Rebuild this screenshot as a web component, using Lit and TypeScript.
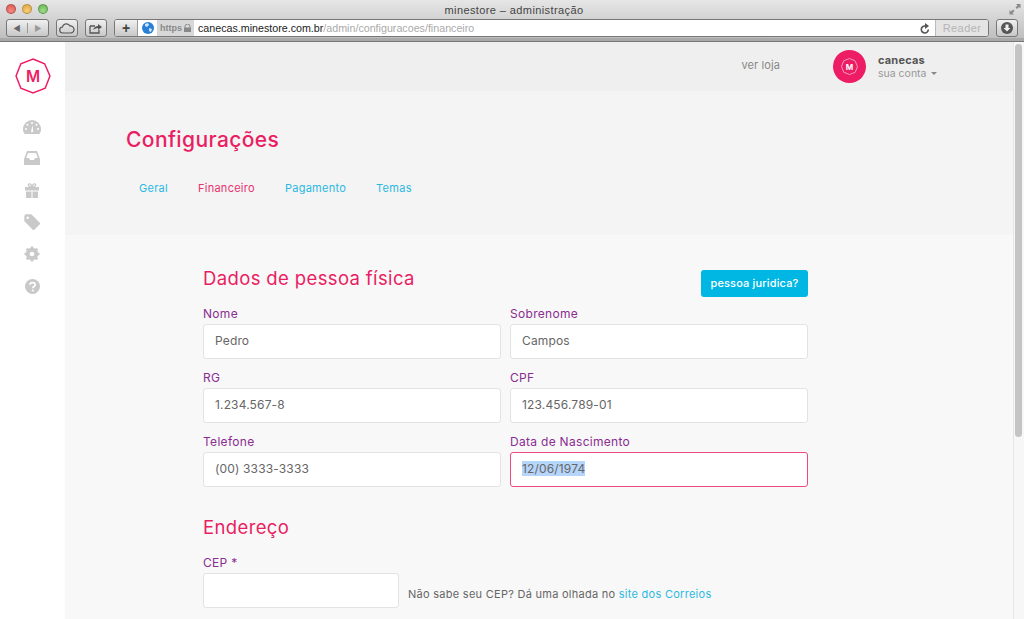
import { LitElement, html, css, svg } from "lit";
import { customElement } from "lit/decorators.js";

const field = (label: string, value: string, focus = false) => html`
  <div class="field">
    <label>${label}</label>
    <div class="input ${focus ? "focus" : ""}">${focus ? html`<span class="sel">${value}</span>` : value}</div>
  </div>`;

const octagon = svg`<polygon points="17,1 28,5.500 33,17 28.500,28.500 17,33 5.500,28.500 1,17 5.500,5.500" fill="none" stroke="#ee1c64" stroke-width="1.4"/>`;

@customElement("app-root")
export class AppRoot extends LitElement {
  static styles = css`
    :host { display: block; width: 1024px; height: 619px; overflow: hidden; position: relative; font-family: "Inter", "Liberation Sans", sans-serif; background: #f8f8f8; }
    * { box-sizing: border-box; }
    .chrome { height: 42px; background: linear-gradient(#e6e6e6, #bcbcbc); border-bottom: 1px solid #777; box-shadow: inset 0 -3px 0 #a9a9a9; position: relative; display: flex; flex-direction: column; }
    .titlebar { height: 19px; display: flex; align-items: center; justify-content: center; padding-left: 4px; font: 11px "Liberation Sans", sans-serif; letter-spacing: .4px; color: #444; position: relative; }
    .lights { position: absolute; left: 6px; top: 4px; display: flex; gap: 6px; }
    .light { width: 10px; height: 10px; border-radius: 50%; border: 1px solid #0003; }
    .red { background: radial-gradient(circle at 50% 70%, #f28b82, #d9534a); }
    .amber { background: radial-gradient(circle at 50% 70%, #f6cf7a, #e0a23c); }
    .green { background: radial-gradient(circle at 50% 70%, #a2dc8c, #5fb14d); }
    .expand { position: absolute; right: 3px; top: 3px; }
    .toolbar { height: 19px; display: flex; align-items: stretch; padding: 0 6px; gap: 7px; }
    .tbtn { height: 18px; border: 1px solid #777; border-radius: 3px; background: linear-gradient(#f0f0f0, #c8c8c8); display: flex; align-items: center; justify-content: center; flex: none; }
    .nav { width: 43px; }
    .nav span { flex: 1; text-align: center; font-size: 8px; color: #666; }
    .nav span + span { border-left: 1px solid #999; color: #999; }
    .cloud, .share { width: 22px; }
    .urlbar { flex: 1; height: 18px; border: 1px solid #777; border-radius: 3px; background: #fff; display: flex; align-items: center; overflow: hidden; }
    .plus { width: 23px; height: 100%; background: linear-gradient(#f0f0f0, #c8c8c8); border-right: 1px solid #999; display: flex; align-items: center; justify-content: center; font: bold 14px "Liberation Sans", sans-serif; color: #444; }
    .globe { margin: 0 3px 0 4px; display: block; flex: none; }
    .https { font: bold 9px "Liberation Sans", sans-serif; color: #888; background: #d8d8d8; height: 100%; width: 37px; padding-left: 3px; display: flex; align-items: center; gap: 2px; flex: none; }
    .url { flex: 1; font: 10.7px "Liberation Sans", sans-serif; color: #222; padding-left: 4px; }
    .url i { font-style: normal; color: #aaa; }
    .reload { margin-right: 5px; display: block; }
    .reader { width: 53px; height: 100%; background: #e4e4e4; border-left: 1px solid #bbb; color: #b5b5b5; font: 11px "Liberation Sans", sans-serif; letter-spacing: .4px; display: flex; align-items: center; justify-content: center; }
    .dl { width: 22px; }
    .body { display: flex; height: 577px; }
    .side { width: 65px; flex: none; background: #fff; display: flex; flex-direction: column; align-items: center; padding-top: 16px; }
    .logo { display: block; margin-bottom: 17px; }
    .sideicon { height: 32px; width: 65px; display: flex; align-items: center; justify-content: center; padding-right: 1px; }
    .sideicon.dash { height: 31px; }
    .main { flex: 1; min-width: 0; }
    .top { height: 49px; background: #efefef; display: flex; align-items: center; padding-right: 85px; justify-content: flex-end; }
    .verloja { font-size: 11px; letter-spacing: .1px; color: #888; margin-right: 53px; margin-bottom: 3px; }
    .avatar { width: 33px; height: 33px; border-radius: 50%; background: #ee1c64; display: flex; align-items: center; justify-content: center; margin-right: 12px; }
    .who { width: 61px; }
    .who b { display: block; font-size: 11px; font-weight: 700; color: #555; line-height: 14px; letter-spacing: .2px; }
    .who span { font-size: 10.5px; color: #999; line-height: 13px; display: flex; align-items: center; gap: 5px; white-space: nowrap; }
    .caret { width: 0; height: 0; border: 3px solid transparent; border-top: 3px solid #888; margin-top: 3px; }
    .head { height: 144px; background: #f4f4f4; padding: 35px 0 0 61px; }
    h1 { margin: 0; font-size: 21px; line-height: 28px; font-weight: 500; color: #e91e63; letter-spacing: .4px; }
    .tabs { display: flex; margin: 26px 0 0 13px; gap: 30px; font-size: 11px; letter-spacing: .27px; line-height: 16px; color: #2bb8e3; }
    .tabs .on { color: #e8326f; }
    .content { padding: 30px 0 0 138px; width: 743px; }
    .sect { display: flex; justify-content: space-between; align-items: flex-start; height: 41px; }
    h2 { margin: 0; font-size: 18.5px; line-height: 26px; font-weight: 400; color: #e91e63; letter-spacing: .37px; }
    .btn { width: 107px; height: 27px; margin-top: 5px; padding-bottom: 1px; background: #00b7e4; color: #fff; border-radius: 3px; font-size: 11px; letter-spacing: .15px; font-weight: 500; display: flex; align-items: center; justify-content: center; }
    .grid { display: grid; grid-template-columns: 298px 298px; column-gap: 9px; row-gap: 11px; }
    .field label { display: block; font-size: 12px; letter-spacing: .3px; line-height: 15px; color: #8a2c92; height: 18px; }
    .input { height: 35px; background: #fff; border: 1px solid #e3e3e3; border-radius: 3px; padding: 0 0 2px 11px; font-size: 12px; letter-spacing: .15px; color: #666; display: flex; align-items: center; }
    .input.focus { border-color: #ec4a80; }
    .sel { background: #b5d5fb; line-height: 15px; }
    .addr { margin-top: 27px; height: 41px; }
    .cep { display: flex; align-items: flex-end; gap: 9px; }
    .cep .field { width: 196px; }
    .hint { font-size: 11px; letter-spacing: .27px; line-height: 14px; color: #666; padding-bottom: 7px; white-space: nowrap; }
    .hint a { color: #2bb8e3; }
    .scroll { position: absolute; right: 2px; top: 44px; width: 7px; height: 393px; background: #c4c4c4; border-radius: 4px; }
    .gutter { position: absolute; right: 0; top: 42px; bottom: 0; width: 11px; background: #f7f7f7; border-left: 1px solid #e6e6e6; }
  `;

  render() {
    const g = "#c9c9c9";
    return html`
      <div class="chrome">
        <div class="titlebar">
          <div class="lights">
            <div class="light red"></div>
            <div class="light amber"></div>
            <div class="light green"></div>
          </div>
          minestore – administração
          <svg class="expand" width="12" height="12" viewBox="0 0 12 12"><path d="M7 1h4.500v4.500L10 4 8 6 6.500 4.500l2-2zM.5 11.500V7L2 8.500l2-2L5.500 8l-2 2L5 11.500z" fill="#8a8a8a"/></svg>
        </div>
        <div class="toolbar">
          <div class="tbtn nav"><span>◀</span><span>▶</span></div>
          <div class="tbtn cloud"><svg width="16" height="11" viewBox="0 0 16 11"><path d="M4 10a3 3 0 0 1-.5-6A4 4 0 0 1 11 3a3.400 3.400 0 0 1 1 7z" fill="none" stroke="#555" stroke-width="1.200"/></svg></div>
          <div class="tbtn share"><svg width="14" height="11" viewBox="0 0 14 11"><path d="M1 3h5M1 3v7h9V7" fill="none" stroke="#555" stroke-width="1.300"/><path d="M4 7c1-3 3-4 5-4V1l4 3-4 3V5C7 5 5 6 4 7z" fill="#555"/></svg></div>
          <div class="urlbar">
            <div class="plus">+</div>
            <svg class="globe" width="12" height="12" viewBox="0 0 12 12"><circle cx="6" cy="6" r="6" fill="#2a7fd6"/><path d="M3 2l3-1 1 2-2 2-2-1zM7 6l3 1-1 3-2-1z" fill="#cfe6fa"/></svg>
            <div class="https">https <svg width="7" height="8" viewBox="0 0 7 8"><path d="M1 4V2.500a2.500 2.500 0 0 1 5 0V4" fill="none" stroke="#888"/><rect y="3.500" width="7" height="4.500" fill="#888"/></svg></div>
            <div class="url">canecas.minestore.com.br<i>/admin/configuracoes/financeiro</i></div>
            <svg class="reload" width="10" height="11" viewBox="0 0 10 11"><path d="M8.300 6.500A3.500 3.500 0 1 1 5 3" fill="none" stroke="#555" stroke-width="1.600"/><path d="M5 0l4 3-4 3z" fill="#555"/></svg>
            <div class="reader">Reader</div>
          </div>
          <div class="tbtn dl"><svg width="12" height="12" viewBox="0 0 12 12"><circle cx="6" cy="6" r="6" fill="#555"/><path d="M4.500 2.500h3V6H9.500L6 9.500 2.500 6h2z" fill="#eee"/></svg></div>
        </div>
      </div>
      <div class="body">
        <nav class="side">
          <svg class="logo" width="36" height="36" viewBox="0 0 34 34">${octagon}<text x="17" y="22.500" text-anchor="middle" font-family="Inter, sans-serif" font-size="14.500" font-weight="600" fill="#ee1c64">M</text></svg>
          <div class="sideicon dash"><svg width="18" height="14" viewBox="0 0 18 14"><path d="M9 0a9 9 0 0 1 9 9c0 2-.5 3.500-1.500 5h-15C.5 12.500 0 11 0 9a9 9 0 0 1 9-9z" fill="${g}"/><g fill="#fff"><circle cx="9" cy="3" r="1"/><circle cx="4.500" cy="4.800" r="1"/><circle cx="13.500" cy="4.800" r="1"/><circle cx="3" cy="9" r="1"/><circle cx="15" cy="9" r="1"/><path d="M8 12l1.500-7 .8 7z"/></g></svg></div>
          <div class="sideicon"><svg width="16" height="14" viewBox="0 0 16 14"><path d="M3 0h10l3 8v6H0V8zM4 2 2.300 7H5l1 2h4l1-2h2.700L12 2z" fill="${g}" fill-rule="evenodd"/></svg></div>
          <div class="sideicon"><svg width="14" height="15" viewBox="0 0 14 15"><path d="M0 4h14v3.500H0zM1 8.500h5.500V15H1zM7.500 8.500H13V15H7.500z" fill="${g}"/><path d="M7 4C4.500 4 3 3 3.500 1.500S6.500 1 7 4c.5-3 3-4 3.500-2.500S9.500 4 7 4z" fill="none" stroke="${g}" stroke-width="1.300"/></svg></div>
          <div class="sideicon"><svg width="16" height="16" viewBox="0 0 16 16"><path d="M0 1.500 1.500 0H7l8.500 8.500a1 1 0 0 1 0 1.500L10 15.500a1 1 0 0 1-1.500 0L0 7z" fill="${g}" transform="translate(.3 .2)"/><circle cx="3.700" cy="3.700" r="1.200" fill="#fff"/></svg></div>
          <div class="sideicon"><svg width="16" height="16" viewBox="0 0 16 16"><circle cx="8" cy="8" r="4.500" fill="none" stroke="${g}" stroke-width="3.400"/><path d="M8 .5v15M.5 8h15M2.700 2.700l10.600 10.600M13.300 2.700 2.700 13.300" stroke="${g}" stroke-width="2.600"/><circle cx="8" cy="8" r="2.300" fill="#fff"/></svg></div>
          <div class="sideicon"><svg width="15" height="15" viewBox="0 0 15 15"><circle cx="7.500" cy="7.500" r="7.500" fill="${g}"/><path d="M5 5.800c0-3 5.200-3 5.200 0 0 1.800-2.300 1.700-2.300 3.400" fill="none" stroke="#fff" stroke-width="1.700"/><circle cx="7.800" cy="11.500" r="1.100" fill="#fff"/></svg></div>
        </nav>
        <div class="main">
          <div class="top">
            <span class="verloja">ver loja</span>
            <div class="avatar"><svg width="17" height="17" viewBox="0 0 34 34"><polygon points="17,1 28,5.500 33,17 28.500,28.500 17,33 5.500,28.500 1,17 5.500,5.500" fill="none" stroke="#f9a9c4" stroke-width="1.800"/><text x="17" y="23" text-anchor="middle" font-family="Inter, sans-serif" font-size="16" font-weight="700" fill="#fff">M</text></svg></div>
            <div class="who"><b>canecas</b><span>sua conta <i class="caret"></i></span></div>
          </div>
          <div class="head">
            <h1>Configurações</h1>
            <div class="tabs"><span>Geral</span><span class="on">Financeiro</span><span>Pagamento</span><span>Temas</span></div>
          </div>
          <div class="content">
            <div class="sect"><h2>Dados de pessoa física</h2><div class="btn">pessoa juridica?</div></div>
            <div class="grid">
              ${field("Nome", "Pedro")}
              ${field("Sobrenome", "Campos")}
              ${field("RG", "1.234.567-8")}
              ${field("CPF", "123.456.789-01")}
              ${field("Telefone", "(00) 3333-3333")}
              ${field("Data de Nascimento", "12/06/1974", true)}
            </div>
            <div class="sect addr"><h2>Endereço</h2></div>
            <div class="cep">
              ${field("CEP *", "")}
              <div class="hint">Não sabe seu CEP? Dá uma olhada no <a>site dos Correios</a></div>
            </div>
          </div>
        </div>
      </div>
      <div class="gutter"></div>
      <div class="scroll"></div>
    `;
  }
}
